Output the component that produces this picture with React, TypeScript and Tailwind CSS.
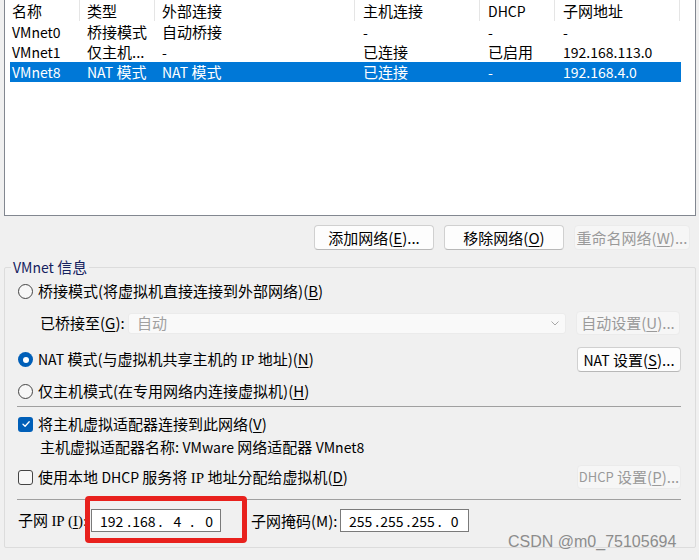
import React from 'react';

const U = ({ c }: { c: string }) => <span className="underline underline-offset-2">{c}</span>;
const L = ({ children }: { children: React.ReactNode }) => <span className="text-[14px]">{children}</span>;
const Serif = ({ children }: { children: React.ReactNode }) => (
  <span className="font-['Liberation_Serif',serif] text-[15px]">{children}</span>
);

const Radio = ({ on }: { on?: boolean }) =>
  on ? (
    <span className="flex h-[15px] w-[15px] shrink-0 items-center justify-center rounded-full bg-[#005fb8]">
      <span className="h-[6px] w-[6px] rounded-full bg-white" />
    </span>
  ) : (
    <span className="h-[15px] w-[15px] shrink-0 rounded-full border border-[#444] bg-[#f7f7f7]" />
  );

const Check = ({ on }: { on?: boolean }) =>
  on ? (
    <span className="flex h-[15px] w-[15px] shrink-0 items-center justify-center rounded-[3px] bg-[#005fb8]">
      <svg width="10" height="10" viewBox="0 0 10 10" fill="none">
        <path d="M2 5.2 L4.1 7.2 L8.2 2.8" stroke="white" strokeWidth="1.3" strokeLinecap="round" strokeLinejoin="round" />
      </svg>
    </span>
  ) : (
    <span className="h-[15px] w-[15px] shrink-0 rounded-[3px] border border-[#444] bg-[#f7f7f7]" />
  );

const Btn = ({ w, h = 'h-[25px]', disabled, children }: { w: string; h?: string; disabled?: boolean; children: React.ReactNode }) => (
  <div
    className={
      disabled
        ? `${w} ${h} flex shrink-0 items-center justify-center whitespace-nowrap rounded-[4px] border border-[#ebebeb] bg-[#f6f6f6] text-[#9a9a9a]`
        : `${w} ${h} flex shrink-0 items-center justify-center whitespace-nowrap rounded-[4px] border border-[#d0d0d0] border-b-[#b8b8b8] bg-[#fdfdfd] text-black`
    }
  >
    {children}
  </div>
);

const headW = ['w-[75px] pl-[7px]', 'w-[75px] pl-[7px]', 'w-[200px] pl-[7px]', 'w-[125px] pl-[8px]', 'w-[75px] pl-[8px]', 'w-[125px] pl-[8px]'];
const rowW = ['w-[70px] pl-[2px]', 'w-[75px] pl-[7px]', 'w-[200px] pl-[7px]', 'w-[125px] pl-[8px]', 'w-[75px] pl-[8px]', 'w-[125px] pl-[8px]'];

const rows: { cells: React.ReactNode[]; sel?: boolean }[] = [
  { cells: [<L>VMnet0</L>, '桥接模式', '自动桥接', <L>-</L>, <L>-</L>, <L>-</L>] },
  { cells: [<L>VMnet1</L>, '仅主机...', <L>-</L>, '已连接', '已启用', <L>192.168.113.0</L>] },
  { cells: [<L>VMnet8</L>, <><L>NAT</L> 模式</>, <><L>NAT</L> 模式</>, '已连接', <L>-</L>, <L>192.168.4.0</L>], sel: true },
];

const IpBox = ({ w, parts }: { w: string; parts: { t: string; ml: string }[] }) => (
  <div className={`${w} flex h-[23px] shrink-0 items-center border border-[#7a7a7a] bg-white text-[14px]`}>
    {parts.map((p, i) => (
      <span key={i} className={p.ml}>
        {p.t}
      </span>
    ))}
  </div>
);

export default function App() {
  return (
    <div className="relative h-[560px] w-[699px] overflow-hidden bg-[#f0f0f0] font-['Noto_Sans_CJK_SC',sans-serif] text-[15px] leading-[20px] text-black">
      {/* network list */}
      <div className="ml-[4px] h-[216px] w-[692px] border-x border-b border-[#828790] bg-white">
        <div className="flex h-[22px]">
          {['名称', '类型', '外部连接', '主机连接', <L>DHCP</L>, '子网地址'].map((h, i) => (
            <div key={i} className={`${headW[i]} flex h-[21px] items-center border-r border-[#e5e5e5]`}>
              {h}
            </div>
          ))}
        </div>
        {rows.map((r, ri) => (
          <div key={ri} className={`ml-[5px] flex h-[20px] w-[671px] items-center ${r.sel ? 'bg-[#0078d7] text-white' : ''}`}>
            {r.cells.map((c, i) => (
              <div key={i} className={`${rowW[i]} whitespace-nowrap`}>
                {c}
              </div>
            ))}
          </div>
        ))}
      </div>

      {/* list buttons */}
      <div className="mt-[9px] flex justify-end gap-[10px] pr-[9px]">
        <Btn w="w-[120px]">添加网络(<U c="E" />)...</Btn>
        <Btn w="w-[120px]">移除网络(<U c="O" />)</Btn>
        <Btn w="w-[116px]" disabled>重命名网络(<U c="W" />)...</Btn>
      </div>

      {/* VMnet info group */}
      <fieldset className="mt-[7px] ml-[4px] h-[291px] w-[692px] rounded-[2px] border border-[#dcdcdc] p-0">
        <legend className="ml-[6px] h-[20px] px-[2px] leading-[20px] text-[#14215e]">
          <L>VMnet</L> 信息
        </legend>
        <div className="pl-[13px] pr-[14px]">
          <div className="mt-[3px] flex h-[22px] items-center">
            <Radio />
            <span className="ml-[5px]">桥接模式(将虚拟机直接连接到外部网络)(<U c="B" />)</span>
          </div>

          <div className="mt-[9px] flex h-[24px] items-center">
            <span className="ml-[22px] w-[88px]">已桥接至(<U c="G" />):</span>
            <div className="flex h-[21px] w-[438px] items-center justify-between rounded-[3px] border border-[#ebebeb] bg-[#f9f9f9] pl-[8px] pr-[4px] text-[#a0a0a0]">
              <span>自动</span>
              <svg width="12" height="12" viewBox="0 0 12 12" fill="none">
                <path d="M2.5 4.5 L6 8 L9.5 4.5" stroke="#a8a8a8" strokeWidth="1" />
              </svg>
            </div>
            <div className="ml-[10px]">
              <Btn w="w-[104px]" h="h-[24px]" disabled>
                自动设置(<U c="U" />)...
              </Btn>
            </div>
          </div>

          <div className="mt-[12px] flex h-[25px] items-center justify-between">
            <div className="flex items-center">
              <Radio on />
              <span className="ml-[5px]">
                <L>NAT</L> 模式(与虚拟机共享主机的 <Serif>IP</Serif> 地址)(<U c="N" />)
              </span>
            </div>
            <Btn w="w-[104px]">
              <L>NAT</L>&nbsp;设置(<U c="S" />)...
            </Btn>
          </div>

          <div className="mt-[8px] flex h-[22px] items-center">
            <Radio />
            <span className="ml-[5px]">仅主机模式(在专用网络内连接虚拟机)(<U c="H" />)</span>
          </div>

          <div className="mt-[4px] -ml-px h-px w-[664px] bg-[#a0a0a0]" />

          <div className="mt-[6px] flex h-[22px] items-center">
            <Check on />
            <span className="ml-[5px]">将主机虚拟适配器连接到此网络(<U c="V" />)</span>
          </div>
          <div className="mt-[2px] h-[20px] pl-[22px] whitespace-nowrap">
            主机虚拟适配器名称: <L>VMware</L> 网络适配器 <L>VMnet8</L>
          </div>

          <div className="mt-[8px] flex h-[24px] items-center justify-between">
            <div className="flex items-center">
              <Check />
              <span className="ml-[5px]">
                使用本地 <L>DHCP</L> 服务将 <Serif>IP</Serif> 地址分配给虚拟机(<U c="D" />)
              </span>
            </div>
            <Btn w="w-[104px]" h="h-[24px]" disabled>
              <span className="text-[13px]">DHCP</span>&nbsp;设置(<U c="P" />)...
            </Btn>
          </div>

          <div className="mt-[10px] -ml-px h-px w-[664px] bg-[#a0a0a0]" />

          <div className="mt-[9px] flex h-[23px] items-center">
            <span className="w-[73px] whitespace-nowrap">
              子网 <Serif>IP (<U c="I" />):</Serif>
            </span>
            <IpBox
              w="w-[130px]"
              parts={[
                { t: '192', ml: 'ml-[8px]' },
                { t: '.', ml: 'ml-[4px]' },
                { t: '168', ml: 'ml-[1px]' },
                { t: '.', ml: 'ml-[3px]' },
                { t: '4', ml: 'ml-[11px]' },
                { t: '.', ml: 'ml-[9px]' },
                { t: '0', ml: 'ml-[11px]' },
              ]}
            />
            <span className="ml-[30px] w-[89px] whitespace-nowrap">子网掩码(M):</span>
            <IpBox
              w="w-[129px]"
              parts={[
                { t: '255', ml: 'ml-[8px]' },
                { t: '.', ml: 'ml-[3px]' },
                { t: '255', ml: 'ml-[1px]' },
                { t: '.', ml: 'ml-[3px]' },
                { t: '255', ml: 'ml-[1px]' },
                { t: '.', ml: 'ml-[3px]' },
                { t: '0', ml: 'ml-[9px]' },
              ]}
            />
          </div>
        </div>
      </fieldset>

      {/* annotation */}
      <div className="absolute left-[85px] top-[496px] h-[47px] w-[162px] rounded-[4px] border-[5px] border-[#e8211d]" />
      {/* watermark */}
      <div className="absolute left-[508px] top-[531px] font-['Liberation_Sans',sans-serif] text-[16px] leading-[22px] text-[#8c8c8c]">
        CSDN @m0_75105694
      </div>
    </div>
  );
}
